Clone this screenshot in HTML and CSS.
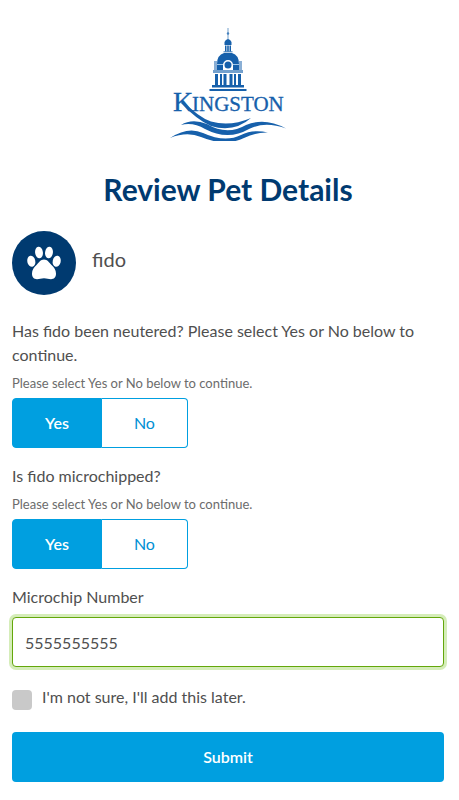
FILE: index.html
```
<!DOCTYPE html>
<html lang="en">
	<head>
		<meta charset="UTF-8" />
		<meta
			name="viewport"
			content="width=device-width, initial-scale=1.0" />
		<title>Review Pet Details</title>

		<link rel="stylesheet" href="styles.css">
	</head>
	<body>
		<header class="header">
			<svg class="logo" viewBox="0 0 117 114" role="img" aria-label="Kingston">
				<!-- dome -->
				<g fill="#1660ab">
					<path d="M57.5 1h1v12h-1z" opacity="0.6" />
					<circle cx="58" cy="6.5" r="1.2" opacity="0.7" />
					<path d="M54.5 18v-3q1-2.500 3.500-3q2.500 .5 3.500 3v3z" />
					<path d="M55 18.500h1.500v6h-1.500zM57.200 18.500h1.600v6h-1.600zM59.500 18.500h1.500v6h-1.500z" />
					<path d="M53.500 24h9v1.500h-9z" opacity="0.6" />
					<path d="M47 37q0-9 7-11h8q7 2 7 11v6h-6v-5a5 5 0 0 0-10 0v5h-6z" />
					<path d="M44 34h3v9h-3zM69 34h3v9h-3z" opacity="0.5" />
					<path d="M47 37h6v1h-6zM63 37h6v1h-6z" fill="#9fc6e8" />
					<circle cx="58" cy="38" r="3.500" />
					<path d="M43 43h30v3h-30z" opacity="0.6" />
					<path d="M45 47h3v11h-3zM50 47h2v11h-2zM53.500 47h3v11h-3zM59.500 47h3v11h-3zM64 47h2v11h-2zM68 47h3v11h-3z" />
					<path d="M42 58h32v2.500h-32zM39.500 62h37v2h-37z" />
				</g>
				<g class="logo__name">
					<text class="logo__initial" x="3" y="84">K</text>
					<text class="logo__rest" x="22" y="84">INGSTON</text>
				</g>
				<!-- waves -->
				<g fill="#1660ab">
					<path d="M13 74Q28 90 41 94.500Q60 100 81 91Q64 106 41 99Q27 93 11 76z" />
					<path d="M11 98Q22 91 37 97Q57 109 76 98Q95 90 116 101.500Q95 94 79 102Q58 114 35 102Q23 95 11 98z" />
					<path d="M0 111Q18 99 33 106Q55 116 71 108Q83 102 98 105.500Q86 105 74 111Q55 120 31 110Q17 104 0 111z" />
				</g>
			</svg>
			<h1 class="title">Review Pet Details</h1>
		</header>

		<main>
			<div class="pet">
				<svg class="pet__icon" viewBox="0 0 64 64" aria-hidden="true">
					<circle cx="32" cy="32" r="32" fill="#003a70" />
					<g fill="#fff">
						<ellipse cx="27" cy="21.500" rx="3.900" ry="5.800" transform="rotate(-7 27 21.500)" />
						<ellipse cx="37" cy="21.500" rx="3.900" ry="5.800" transform="rotate(7 37 21.500)" />
						<ellipse cx="19.300" cy="30.300" rx="4" ry="5.600" transform="rotate(-12 19.300 30.300)" />
						<ellipse cx="44.700" cy="30.300" rx="4" ry="5.600" transform="rotate(12 44.700 30.300)" />
						<path d="M32 28.500c3.500 0 5 3 7.500 5.500c2.500 2.300 4.500 5 4.500 8.500c0 4-2 5.700-5 5.700c-2.700 0-4-1-7-1s-4.300 1-7 1c-3 0-5-1.700-5-5.700c0-3.500 2-6.200 4.500-8.500c2.500-2.500 4-5.500 7.500-5.500z" />
					</g>
				</svg>
				<span class="pet__name">fido</span>
			</div>

			<form class="form">
				<fieldset class="field">
					<legend class="field__label">Has fido been neutered? Please select Yes or No below to continue.</legend>
					<p class="field__hint">Please select Yes or No below to continue.</p>
					<div class="toggle">
						<button class="toggle__btn toggle__btn--active" type="button" aria-pressed="true">Yes</button>
						<button class="toggle__btn" type="button" aria-pressed="false">No</button>
					</div>
				</fieldset>

				<fieldset class="field">
					<legend class="field__label">Is fido microchipped?</legend>
					<p class="field__hint">Please select Yes or No below to continue.</p>
					<div class="toggle">
						<button class="toggle__btn toggle__btn--active" type="button" aria-pressed="true">Yes</button>
						<button class="toggle__btn" type="button" aria-pressed="false">No</button>
					</div>
				</fieldset>

				<div class="field">
					<label class="field__label" for="microchip">Microchip Number</label>
					<input class="input" id="microchip" type="text" value="5555555555" />
				</div>

				<div class="check">
					<input class="check__box" id="later" type="checkbox" />
					<label for="later">I'm not sure, I'll add this later.</label>
				</div>

				<button class="submit" type="submit">Submit</button>
			</form>
		</main>
	</body>
</html>
```
FILE: styles.css
```
*,
*::before,
*::after {
	box-sizing: border-box;
}
body {
	margin: 0;
	padding: 27px 15px 16px 12px;
	font-family: Lato, sans-serif;
	font-size: 16px;
	line-height: 24px;
	color: #4f4f4f;
	background-color: #fff;
}
button,
input {
	font: inherit;
}

/* Header */

.header {
	display: flex;
	flex-direction: column;
	align-items: center;
	gap: 28px;
}
.logo {
	width: 117px;
	height: 114px;
}
.logo__name {
	font-family: 'Liberation Serif', serif;
	fill: #1660ab;
	stroke: #1660ab;
	stroke-width: 0.3;
}
.logo__initial {
	font-size: 28px;
}
.logo__rest {
	font-size: 21px;
}
.title {
	margin: 0;
	font-size: 30px;
	font-weight: 700;
	line-height: 40px;
	color: #003a70;
}

/* Pet */

.pet {
	display: flex;
	gap: 16px;
	margin: 22px 0 24px;
}
.pet__icon {
	width: 64px;
	height: 64px;
}
.pet__name {
	padding-top: 16px;
	font-size: 20px;
}

/* Form */

.field {
	min-width: 0;
	margin: 0 0 16px;
	padding: 0;
	border: 0;
}
.field__label {
	display: block;
	padding: 0;
}
.field__hint {
	margin: 6px 0 4px;
	font-size: 13px;
	line-height: 21px;
	color: #6c6c6c;
}
.toggle {
	display: inline-flex;
	vertical-align: top;
}
.toggle__btn {
	height: 50px;
	padding: 0 32px;
	border: 1px solid #009fe0;
	border-radius: 0 4px 4px 0;
	color: #0090d4;
	background-color: #fff;
}
.toggle__btn--active {
	border-radius: 4px 0 0 4px;
	font-weight: 600;
	color: #fff;
	background-color: #009fe0;
}
.toggle__btn + .toggle__btn {
	border-left: 0;
}
.input {
	display: block;
	width: 100%;
	height: 50px;
	margin-top: 8px;
	padding: 0 12px;
	border: 1px solid #64a70b;
	border-radius: 4px;
	outline: none;
	color: #4f4f4f;
	background-color: #fff;
	box-shadow: 0 0 0 3px #d5edb9;
}
.check {
	display: flex;
	gap: 10px;
	margin-top: 18px;
}
.check__box {
	appearance: none;
	width: 20px;
	height: 20px;
	margin: 5px 0 0;
	border-radius: 4px;
	background-color: #c9c9c9;
}
.check__box:checked {
	background-color: #009fe0;
}
.submit {
	width: 100%;
	height: 50px;
	margin-top: 22px;
	border: 0;
	border-radius: 4px;
	font-weight: 600;
	color: #fff;
	background-color: #009fe0;
}
```
